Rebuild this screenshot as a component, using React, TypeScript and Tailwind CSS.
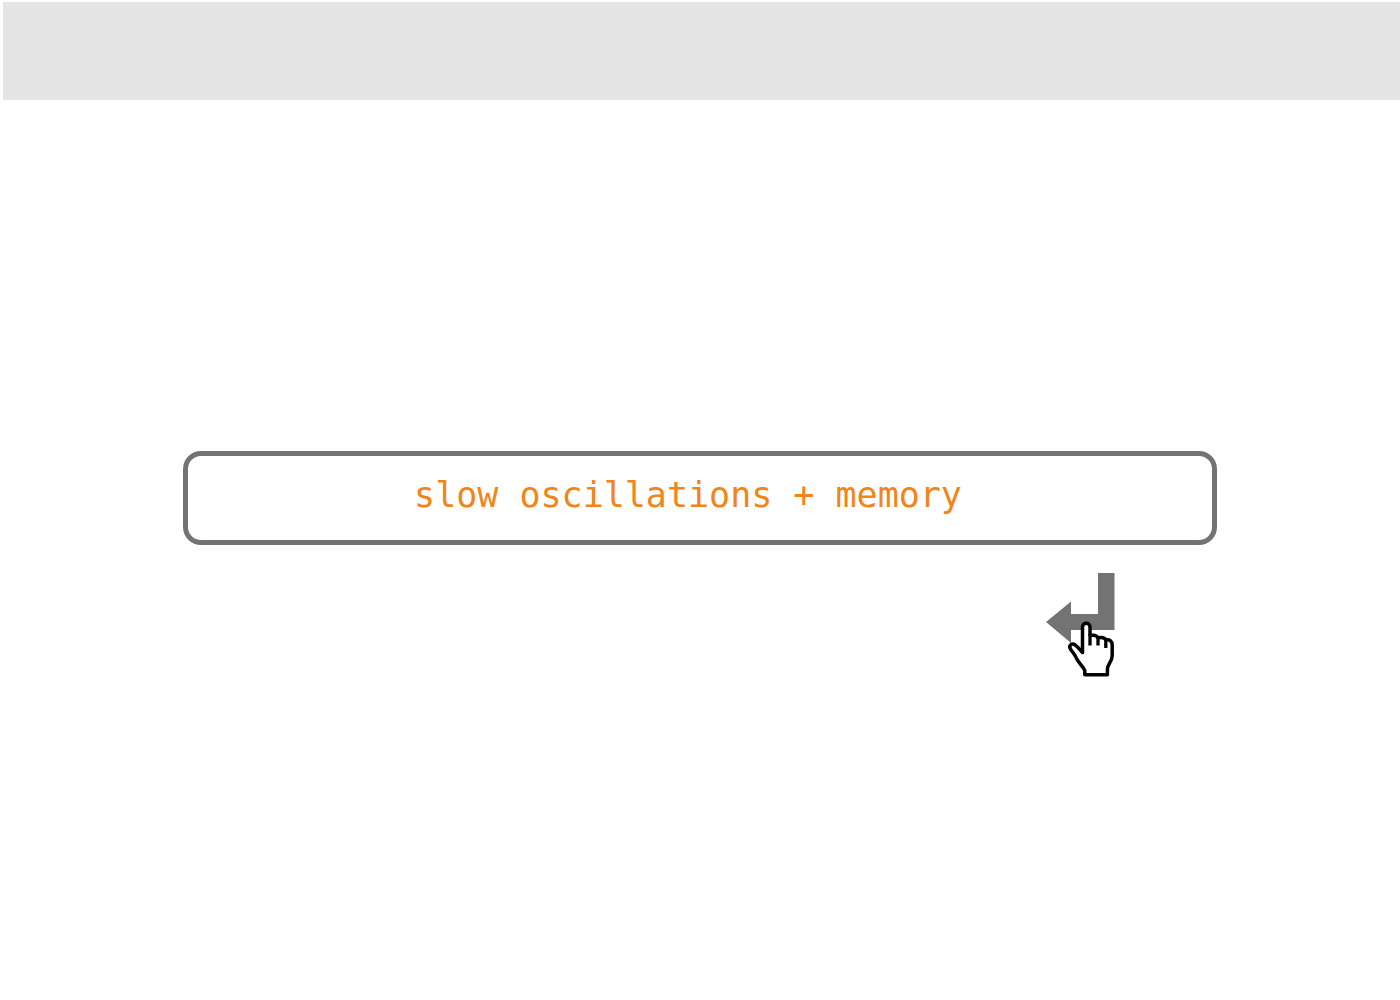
import { useState } from "react";

function ReturnArrow() {
  return (
    <svg width="69" height="70" viewBox="0 0 69 70" aria-hidden="true">
      <path d="M52 0H68.5V57H25V70L0 49L25 28.5V41H52Z" fill="#737373" />
    </svg>
  );
}

function HandPointer() {
  return (
    <svg
      className="pointer-events-none absolute top-[46px] left-5"
      width="50"
      height="60"
      viewBox="0 0 50 60"
      aria-hidden="true"
    >
      <path
        d="M16.5 33.5V8C16.5 3 24 3 24 8V16C28 15.8 31 16.6 32 18.8C36 18 39 18.8 40 21C43.8 20.2 46.2 22.2 46.2 26V37C46 42.5 41.4 45.5 41.4 50V55.8H18.8V51.5C16.5 47 12.8 44 10.8 40C9.3 36 6.8 33.5 4.6 30.2C2.2 26.5 5.8 23.6 9 25.8C12 28 14 31 16.5 33.5Z"
        fill="#fff"
        stroke="#000"
        strokeWidth="3.5"
        strokeLinejoin="round"
      />
      <path
        d="M24 15V26.5M32 18V26.5M39.8 20.5V29"
        fill="none"
        stroke="#000"
        strokeWidth="3.3"
      />
    </svg>
  );
}

export default function App() {
  const [query, setQuery] = useState("slow oscillations + memory");

  return (
    <div className="min-h-screen bg-white pt-0.5">
      <header className="ml-[3px] h-[98px] bg-[#e4e4e4]" />
      <main className="px-[183px] pt-[351px]">
        <form onSubmit={(event) => event.preventDefault()}>
          <input
            type="text"
            aria-label="Search"
            value={query}
            onChange={(event) => setQuery(event.target.value)}
            className="block h-[94px] w-full rounded-[18px] border-5 border-[#737373] bg-white pr-6 pb-1.5 text-center font-['DejaVu_Sans_Mono',monospace] text-[35px] text-[#f08519] outline-none"
          />
          <div className="mt-7 flex justify-end pr-[102px]">
            <button type="submit" aria-label="Submit search" className="relative cursor-pointer">
              <ReturnArrow />
              <HandPointer />
            </button>
          </div>
        </form>
      </main>
    </div>
  );
}
